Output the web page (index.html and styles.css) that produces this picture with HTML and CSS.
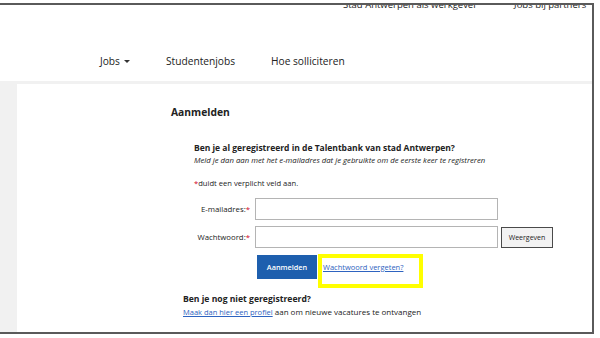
FILE: index.html
```html
<!DOCTYPE html>
<html lang="nl">
<head>
<meta charset="utf-8">
<title>Aanmelden</title>
<link rel="stylesheet" href="styles.css">
</head>
<body>
<div class="frame">
  <div class="toplinks">
    <a class="toplink">Stad Antwerpen als werkgever</a>
    <a class="toplink">Jobs bij partners</a>
  </div>
  <nav class="nav">
    <a class="nav-item">Jobs <span class="caret"></span></a>
    <a class="nav-item">Studentenjobs</a>
    <a class="nav-item">Hoe solliciteren</a>
  </nav>
  <div class="main">
    <div class="side"></div>
    <div class="content">
      <h1 class="title">Aanmelden</h1>
      <section class="login">
        <h2 class="subtitle">Ben je al geregistreerd in de Talentbank van stad Antwerpen?</h2>
        <p class="intro">Meld je dan aan met het e-mailadres dat je gebruikte om de eerste keer te registreren</p>
        <p class="req"><span class="star">*</span>duidt een verplicht veld aan.</p>
        <div class="form">
          <label class="label">E-mailadres:<span class="star">*</span></label>
          <input class="field" type="text">
          <span></span>
          <label class="label">Wachtwoord:<span class="star">*</span></label>
          <input class="field" type="password">
          <button class="btn-show" type="button">Weergeven</button>
          <span></span>
          <div class="actions">
            <button class="btn-primary" type="button">Aanmelden</button>
            <div class="highlight"><a class="link link-block">Wachtwoord vergeten?</a></div>
          </div>
        </div>
      </section>
      <section class="register">
        <h2 class="subtitle">Ben je nog niet geregistreerd?</h2>
        <p class="text"><a class="link">Maak dan hier een profiel</a> aan om nieuwe vacatures te ontvangen</p>
      </section>
    </div>
  </div>
</div>
</body>
</html>
```

FILE: styles.css
```css
* { box-sizing: border-box; }
html, body { margin: 0; padding: 0; background: #fff; }
body { font-family: "Open Sans", "Liberation Sans", sans-serif; color: #222; }

.frame {
  width: 594px;
  height: 331px;
  margin-top: 3px;
  border-top: 2px solid #5a5a5a;
  border-bottom: 2px solid #5a5a5a;
  border-right: 2px solid #5a5a5a;
  display: flex;
  flex-direction: column;
  overflow: hidden;
}

.toplinks {
  display: flex;
  margin-top: -6px;
  height: 12px;
  padding-left: 342px;
  gap: 35px;
}
.toplink {
  font-size: 9.5px;
  line-height: 12px;
  background: #fff;
  color: #222;
  padding: 0 1px;
}

.nav {
  display: flex;
  height: 70px;
  padding: 40px 0 10px 100px;
}
.nav-item {
  font-size: 10.2px;
  line-height: 20px;
  color: #222;
  display: flex;
  align-items: center;
  gap: 4px;
}
.nav-item:nth-child(1) { width: 66px; }
.nav-item:nth-child(2) { width: 105px; }
.caret {
  width: 0; height: 0;
  border-left: 3px solid transparent;
  border-right: 3px solid transparent;
  border-top: 3px solid #333;
}

.main {
  flex: 1;
  display: flex;
  border-top: 3px solid #f1f1f1;
}
.side { width: 17px; background: #f1f1f1; }
.content { flex: 1; padding-left: 154px; }

.title {
  margin: 21px 0 0;
  font-size: 10.3px;
  line-height: 14px;
  font-weight: 700;
}

.login { padding-left: 23px; margin-top: 23px; }
.subtitle {
  margin: 0;
  font-size: 8.5px;
  line-height: 12px;
  font-weight: 700;
}
.intro {
  margin: 0;
  font-size: 7.75px;
  line-height: 12px;
  font-style: italic;
}
.req {
  margin: 11px 0 0;
  font-size: 7.6px;
  line-height: 12px;
}
.star { color: #d0021b; }

.form {
  display: grid;
  grid-template-columns: 57px 243px 51px;
  column-gap: 4px;
  row-gap: 6px;
  margin-top: 9px;
  align-items: center;
}
.form > .btn-show { margin-left: -1px; }
.label {
  font-size: 7.8px;
  text-align: right;
  padding-right: 1px;
  white-space: nowrap;
}
.field {
  height: 22px;
  border: 1px solid #b4b4b4;
  background: #fff;
  margin: 0;
}
.btn-show {
  height: 21px;
  margin: 0;
  padding: 0;
  border: 1px solid #4a4a4a;
  background: #f2f2f2;
  font-family: "Open Sans", sans-serif;
  font-size: 7px;
  color: #222;
}

.actions { display: flex; align-items: flex-start; }
.btn-primary {
  margin: 1px 0 0 2px;
  width: 60px;
  height: 24px;
  border: 0;
  background: #1e5fae;
  color: #fff;
  font-family: "Open Sans", sans-serif;
  font-size: 7.3px;
  font-weight: 600;
  padding: 0;
}
.highlight {
  margin-left: 1px;
  width: 105px;
  height: 34px;
  border: 4px solid #ffff00;
  padding: 3px 0 0 1px;
  line-height: 12px;
}
.link {
  color: #2e63c0;
  text-decoration: underline;
  font-size: 7.5px;
  line-height: 12px;
}
.link-block { display: block; }

.register { padding-left: 12px; margin-top: 5px; }
.register .subtitle { font-size: 8.6px; line-height: 12px; }
.text {
  margin: 1px 0 0;
  font-size: 8px;
  line-height: 12px;
}
```
